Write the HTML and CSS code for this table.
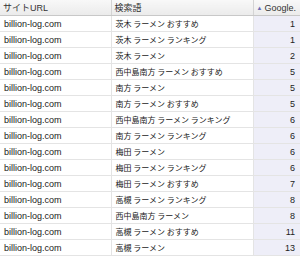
FILE: index.html
```html
<!DOCTYPE html>
<html>
<head>
<meta charset="utf-8">
<link rel="stylesheet" href="styles.css">
</head>
<body>
<table class="grid">
  <colgroup><col class="c1"><col class="c2"><col class="c3"></colgroup>
  <thead>
    <tr><th>サイトURL</th><th>検索語</th><th class="sorted"><span class="arrow">▲</span>Google.</th></tr>
  </thead>
  <tbody>
    <tr><td>billion-log.com</td><td>茨木 ラーメン おすすめ</td><td class="num">1</td></tr>
    <tr><td>billion-log.com</td><td>茨木 ラーメン ランキング</td><td class="num">1</td></tr>
    <tr><td>billion-log.com</td><td>茨木 ラーメン</td><td class="num">2</td></tr>
    <tr><td>billion-log.com</td><td>西中島南方 ラーメン おすすめ</td><td class="num">5</td></tr>
    <tr><td>billion-log.com</td><td>南方 ラーメン</td><td class="num">5</td></tr>
    <tr><td>billion-log.com</td><td>南方 ラーメン おすすめ</td><td class="num">5</td></tr>
    <tr><td>billion-log.com</td><td>西中島南方 ラーメン ランキング</td><td class="num">6</td></tr>
    <tr><td>billion-log.com</td><td>南方 ラーメン ランキング</td><td class="num">6</td></tr>
    <tr><td>billion-log.com</td><td>梅田 ラーメン</td><td class="num">6</td></tr>
    <tr><td>billion-log.com</td><td>梅田 ラーメン ランキング</td><td class="num">6</td></tr>
    <tr><td>billion-log.com</td><td>梅田 ラーメン おすすめ</td><td class="num">7</td></tr>
    <tr><td>billion-log.com</td><td>高槻 ラーメン ランキング</td><td class="num">8</td></tr>
    <tr><td>billion-log.com</td><td>西中島南方 ラーメン</td><td class="num">8</td></tr>
    <tr><td>billion-log.com</td><td>高槻 ラーメン おすすめ</td><td class="num">11</td></tr>
    <tr><td>billion-log.com</td><td>高槻 ラーメン</td><td class="num">13</td></tr>
  </tbody>
</table>
</body>
</html>
```
FILE: styles.css
```css
html, body {
  margin: 0;
  padding: 0;
  background: #ffffff;
}
.grid {
  border-collapse: collapse;
  table-layout: fixed;
  width: 300px;
  font-family: "Liberation Sans", Arial, "Noto Sans CJK JP", sans-serif;
  font-size: 9px;
  color: #222;
}
.c1 { width: 111px; }
.c2 { width: 142px; }
.c3 { width: 47px; }
.grid th {
  height: 15px;
  padding: 0 3px;
  text-align: left;
  font-weight: normal;
  color: #333;
  background: linear-gradient(#f8f8f8, #ebebeb);
  border-bottom: 1px solid #c8c8c8;
  border-right: 1px solid #d4d4d4;
  white-space: nowrap;
  overflow: hidden;
}
.grid th.sorted { border-right: none; }
.arrow {
  font-size: 6px;
  color: #6b6bb5;
  margin-right: 2px;
  vertical-align: 1px;
}
.grid td {
  height: 15px;
  padding: 0 4px;
  border-bottom: 1px solid #e4e4e4;
  border-right: 1px solid #e4e4e4;
  white-space: nowrap;
  overflow: hidden;
}
.grid td:nth-child(2) {
  font-family: "Noto Sans CJK JP", sans-serif;
  font-size: 8px;
}
.grid td.num {
  text-align: right;
  padding-right: 5px;
  background: #eeeef8;
  border-right: none;
}
```
